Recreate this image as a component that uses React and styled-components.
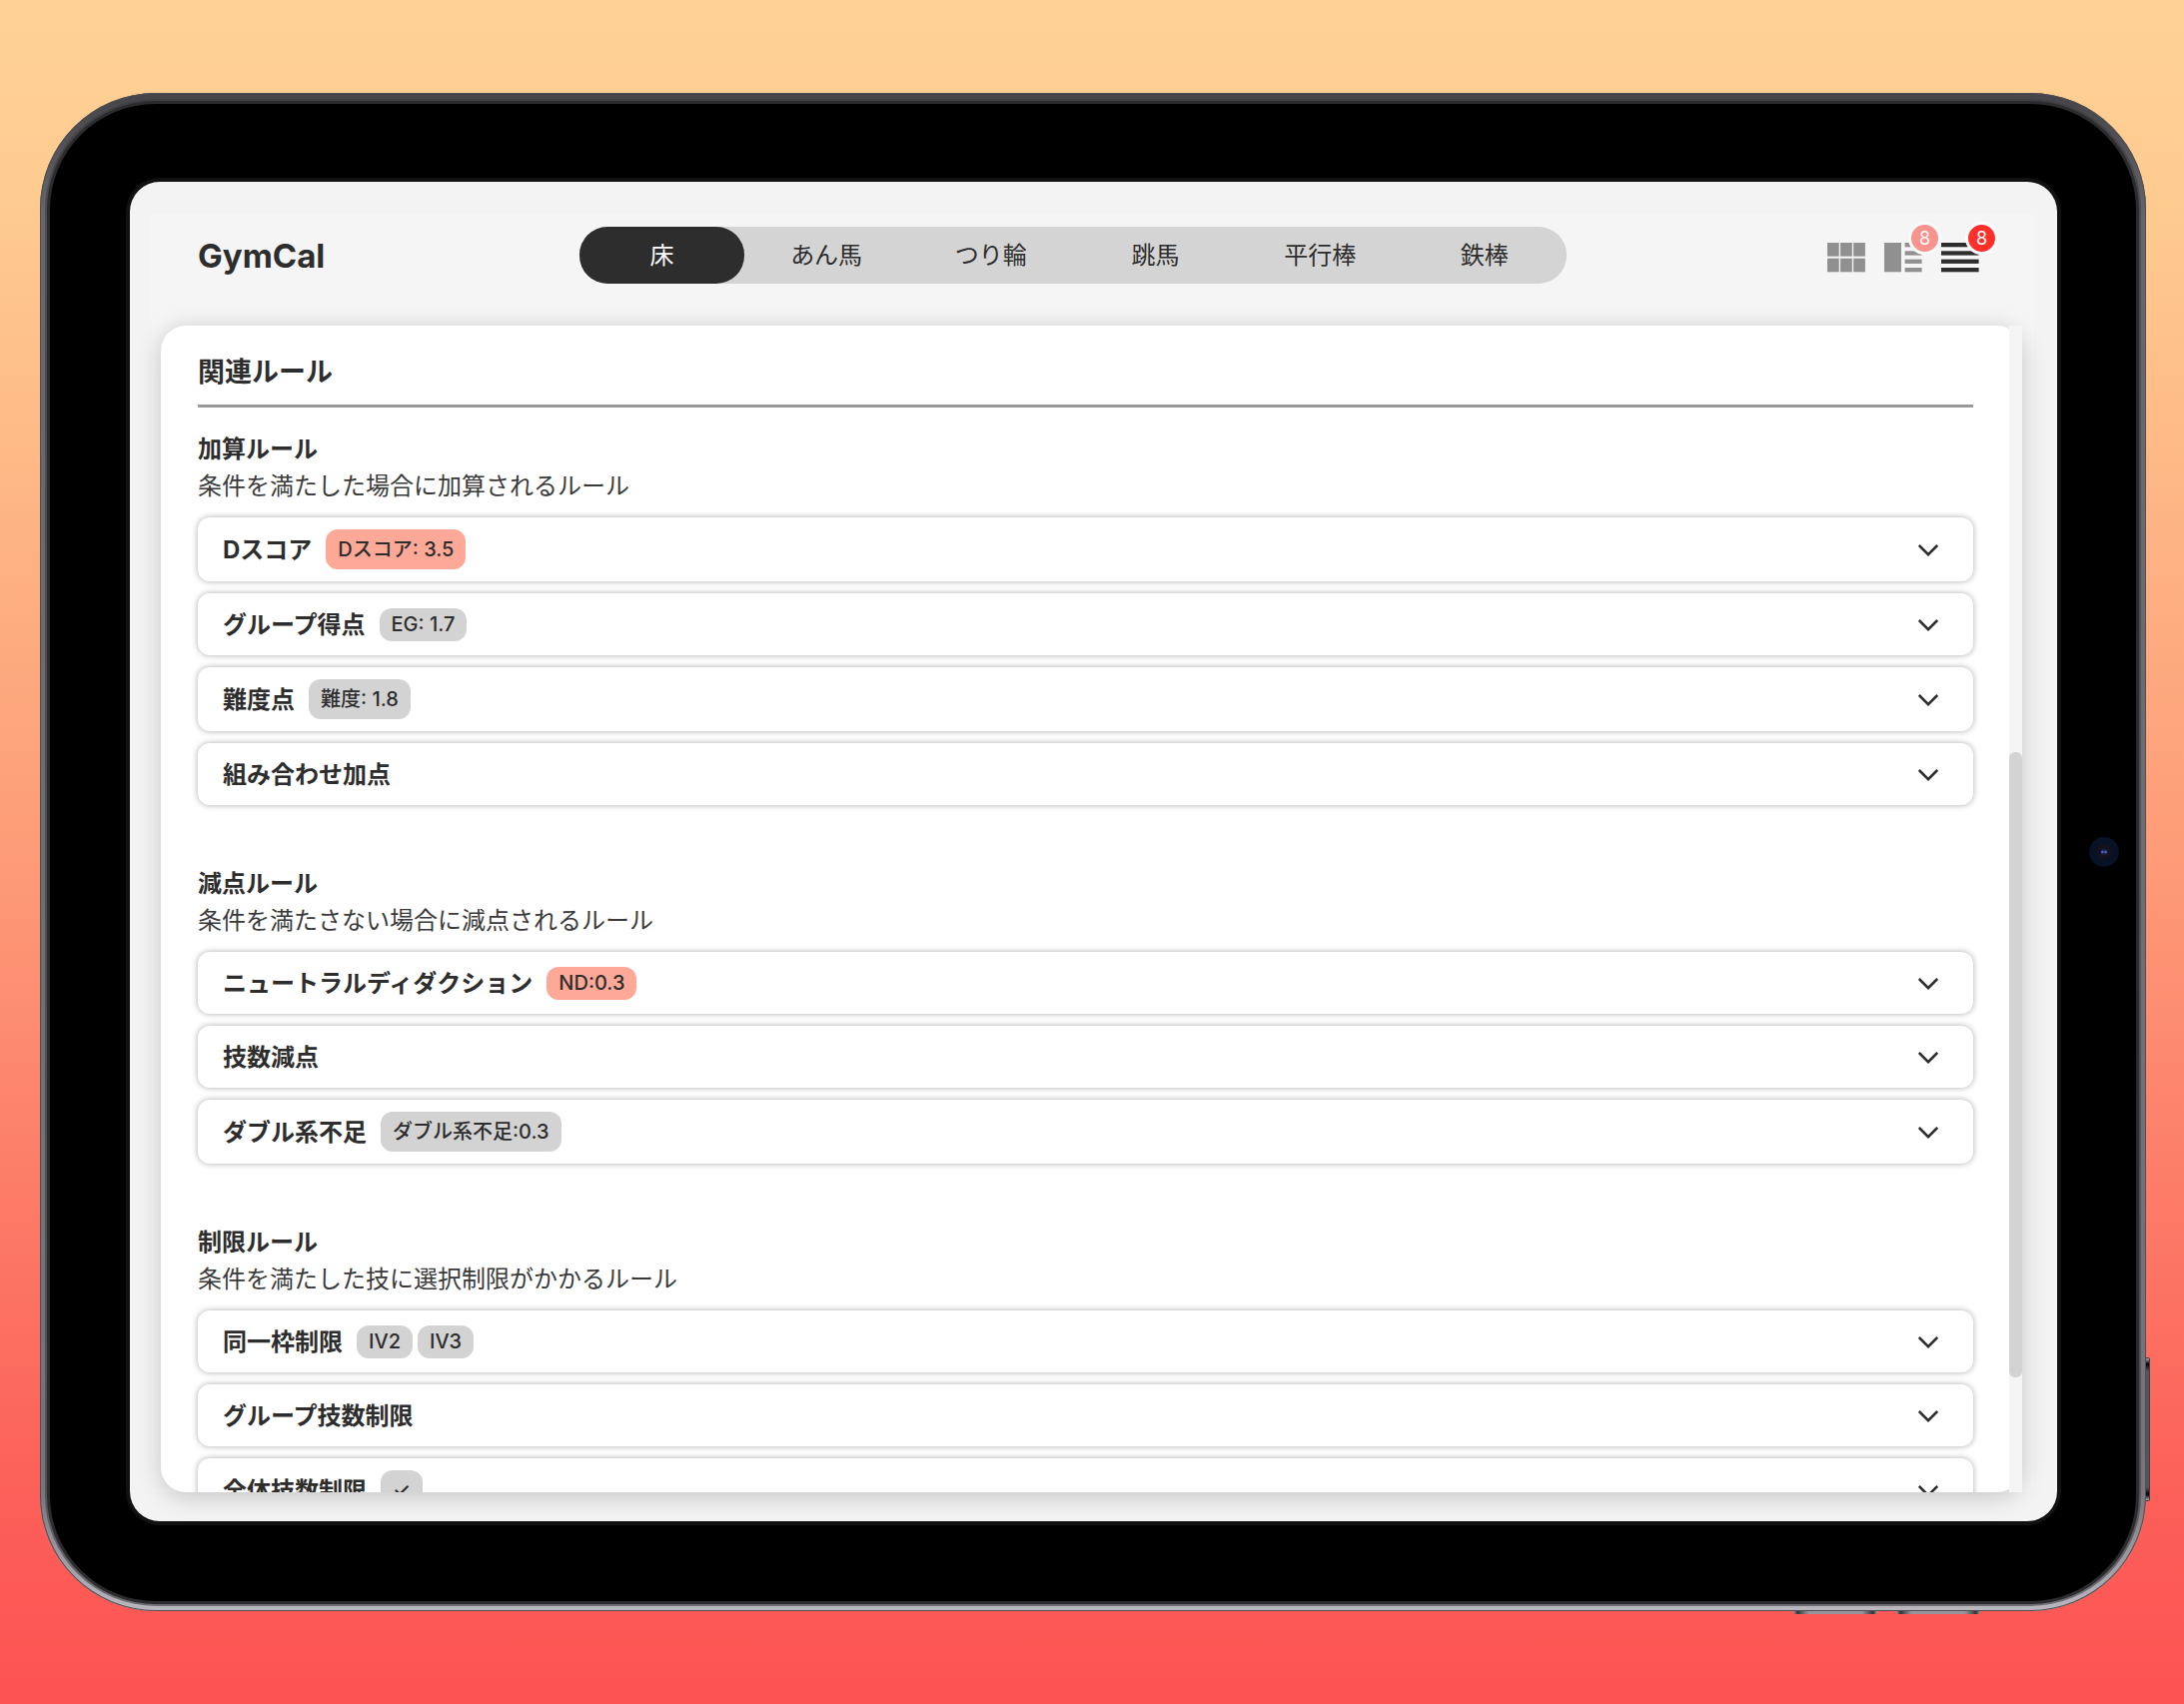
import React, { useState } from "react";
import styled, { createGlobalStyle } from "styled-components";

const GlobalStyle = createGlobalStyle`
  *, *::before, *::after { box-sizing: border-box; }
  body {
    margin: 0;
    color: #2d2d2d;
    font-family: Inter, "Noto Sans CJK JP", sans-serif;
    font-size: 24px;
  }
  h1, h2, h3, p, ul { margin: 0; padding: 0; }
  button { font: inherit; color: inherit; border: 0; background: none; padding: 0; cursor: pointer; }
`;

const Stage = styled.div`
  display: flex;
  height: 100vh;
  padding: 93px 38px 93px 40px;
  background: linear-gradient(180deg, #ffd196 0%, #fecb90 12%, #fd9c78 50%, #fc5f59 88%, #fd5352 100%);
`;

const Device = styled.div`
  position: relative;
  flex: 1;
  display: flex;
  min-width: 0;
  padding: 11px 10px 10px;
  border-radius: 116px;
  background: linear-gradient(180deg, #454448 0%, #66656a 8%, #77757b 92%, #bab7be 100%);
  box-shadow: inset 0 0 0 1px #504f53;
`;

const Bezel = styled.div`
  flex: 1;
  display: flex;
  min-width: 0;
  padding: 78px 79px 80px 80px;
  border-radius: 106px;
  background: #000;
  box-shadow: 0 0 0 3px #2c2c2e, 0 0 0 5px rgba(60, 60, 63, 0.6);
`;

const SideButton = styled.span`
  position: absolute;
  right: -4px;
  bottom: 110px;
  width: 4px;
  height: 144px;
  border: 1px solid #3c3b3e;
  border-left: 0;
  border-radius: 0 2px 2px 0;
  background: linear-gradient(180deg, #aaa 0%, #000 4%, #555 9%, #555 91%, #000 96%, #aaa 100%);
`;

const VolumeButton = styled.span`
  position: absolute;
  bottom: -3px;
  right: ${(p) => p.$right}px;
  width: 84px;
  height: 3px;
  border-radius: 0 0 2px 2px;
  background: linear-gradient(90deg, #999 0%, #333 5%, #98969c 18%, #98969c 82%, #333 95%, #999 100%);
`;

const Camera = styled.svg`
  position: absolute;
  right: 27px;
  top: 50%;
  width: 30px;
  height: 30px;
  margin-top: -15px;
`;

const Screen = styled.div`
  flex: 1;
  display: flex;
  min-width: 0;
  padding: 32px 23px 29px 21px;
  border-radius: 30px;
  background: #f3f3f3;
  box-shadow: 0 0 0 4px #121111;
  overflow: hidden;
`;

const Page = styled.div`
  flex: 1;
  display: flex;
  flex-direction: column;
  min-width: 0;
  background: #f5f5f5;
`;

const Header = styled.header`
  display: flex;
  align-items: center;
  justify-content: space-between;
  height: 83px;
  margin-bottom: 29px;
  padding: 0 55px 0 47px;
`;

const Brand = styled.h1`
  font-size: 33px;
  line-height: 40px;
  font-weight: 700;
`;

const Tabs = styled.nav`
  display: flex;
  flex: 0 1 988px;
  height: 57px;
  margin-right: 6px;
  border-radius: 28px;
  background: #d4d4d4;
`;

const Tab = styled.button`
  flex: 1;
  padding-bottom: 4px;
  border-radius: 28px;
  background: ${(p) => (p.$active ? "#2d2d2d" : "transparent")};
  && { color: ${(p) => (p.$active ? "#fff" : "#2d2d2d")}; }
`;

const Views = styled.div`
  display: flex;
  gap: 19px;
`;

const ViewButton = styled.button`
  position: relative;
  width: 38px;
  height: 30px;
  margin-top: 4px;
  opacity: ${(p) => (p.$active ? 1 : 0.5)};
  svg { display: block; width: 38px; height: 30px; fill: #2d2d2d; }
`;

const Count = styled.span`
  position: absolute;
  top: -21px;
  right: -19px;
  width: 33px;
  height: 33px;
  border: 3px solid #fff;
  border-radius: 50%;
  background: #ff3029;
  color: #fff;
  font-size: 18px;
  line-height: 27px;
  text-align: center;
`;

const Panel = styled.main`
  flex: 1;
  display: flex;
  min-height: 0;
  margin: 0 12px 0 10px;
  border-radius: 25px;
  background: #fff;
  box-shadow: 0 4px 24px rgba(0, 0, 0, 0.2);
`;

const Content = styled.div`
  flex: 1;
  min-width: 0;
  padding: 27px 36px 0 37px;
  border-radius: 25px 0 0 25px;
  overflow: hidden;
`;

const Track = styled.div`
  flex: none;
  display: flex;
  flex-direction: column;
  width: 13px;
  background: #f5f5f5;
`;

const Thumb = styled.div`
  flex: none;
  height: 53.6%;
  margin-top: auto;
  margin-bottom: 115px;
  border-radius: 6px;
  background: #d3d3d3;
`;

const PanelTitle = styled.h2`
  margin-bottom: 23px;
  padding-bottom: 12px;
  border-bottom: 3px solid #999;
  font-size: 27px;
  line-height: 40px;
  font-weight: 700;
`;

const Section = styled.section`
  margin-bottom: 60px;
`;

const SectionTitle = styled.h3`
  font-size: 24px;
  line-height: 37px;
  font-weight: 700;
`;

const Description = styled.p`
  margin-bottom: 13px;
  color: #3a3a3a;
  line-height: 37px;
`;

const Rules = styled.ul`
  display: flex;
  flex-direction: column;
  gap: 12px;
  list-style: none;
`;

const Rule = styled.button`
  display: flex;
  align-items: center;
  width: 100%;
  height: ${(p) => (p.$tall ? 64 : 62)}px;
  padding: 0 35px 0 25px;
  border-radius: 12px;
  background: #fff;
  box-shadow: 0 0 6px rgba(0, 0, 0, 0.33);
  text-align: left;
`;

const RuleName = styled.span`
  margin-right: 14px;
  padding-bottom: 4px;
  font-weight: 700;
`;

const Badges = styled.span`
  display: flex;
  gap: 5px;
`;

const Badge = styled.span`
  padding: 0 12px;
  border-radius: 12px;
  background: ${(p) => (p.$alert ? "#fea998" : "#d3d3d3")};
  font-size: 20px;
  line-height: ${(p) => (p.$tall ? 40 : 33)}px;
  font-weight: 500;
`;

const Chevron = styled.svg`
  width: 20px;
  height: 12px;
  margin-top: 2px;
  margin-left: auto;
  fill: none;
  stroke: #2d2d2d;
  stroke-width: 2.6;
`;

const TABS = ["床", "あん馬", "つり輪", "跳馬", "平行棒", "鉄棒"];

const SECTIONS = [
  {
    title: "加算ルール",
    text: "条件を満たした場合に加算されるルール",
    rules: [
      { name: "Dスコア", tall: true, alert: true, badges: ["Dスコア: 3.5"] },
      { name: "グループ得点", badges: ["EG: 1.7"] },
      { name: "難度点", tall: true, badges: ["難度: 1.8"] },
      { name: "組み合わせ加点" },
    ],
  },
  {
    title: "減点ルール",
    text: "条件を満たさない場合に減点されるルール",
    rules: [
      { name: "ニュートラルディダクション", alert: true, badges: ["ND:0.3"] },
      { name: "技数減点" },
      { name: "ダブル系不足", tall: true, badges: ["ダブル系不足:0.3"] },
    ],
  },
  {
    title: "制限ルール",
    text: "条件を満たした技に選択制限がかかるルール",
    rules: [
      { name: "同一枠制限", badges: ["IV2", "IV3"] },
      { name: "グループ技数制限" },
      { name: "全体技数制限", tall: true, badges: ["✓"] },
    ],
  },
];

const LINE_ROWS = [0, 8.3, 16.6, 25];

const GridIcon = () => (
  <svg viewBox="0 0 38 30" aria-hidden="true">
    {[0, 13.1, 26.2].map((x) =>
      [0, 15.7].map((y) => <rect key={x + "-" + y} x={x} y={y} width="11.7" height="13.6" />)
    )}
  </svg>
);

const SplitIcon = () => (
  <svg viewBox="0 0 38 30" aria-hidden="true">
    <rect width="17" height="29.3" />
    {LINE_ROWS.map((y) => <rect key={y} x="20.6" y={y} width="17" height="4.3" />)}
  </svg>
);

const ListIcon = () => (
  <svg viewBox="0 0 38 30" aria-hidden="true">
    {LINE_ROWS.map((y) => <rect key={y} y={y} width="37.6" height="4.3" />)}
  </svg>
);

const VIEWS = [
  { id: "grid", label: "グリッド表示", Icon: GridIcon },
  { id: "split", label: "分割表示", Icon: SplitIcon, count: 8 },
  { id: "list", label: "リスト表示", Icon: ListIcon, count: 8 },
];

function RuleRow({ rule }) {
  return (
    <li>
      <Rule type="button" aria-expanded="false" $tall={rule.tall}>
        <RuleName>{rule.name}</RuleName>
        <Badges>
          {(rule.badges || []).map((b) => (
            <Badge key={b} $tall={rule.tall} $alert={rule.alert}>{b}</Badge>
          ))}
        </Badges>
        <Chevron viewBox="0 0 20 12" aria-hidden="true">
          <path d="M0.8 0.9 L10 10.1 L19.2 0.9" />
        </Chevron>
      </Rule>
    </li>
  );
}

export default function App() {
  const [tab, setTab] = useState(TABS[0]);
  const [view, setView] = useState("list");
  return (
    <>
      <GlobalStyle />
      <Stage>
        <Device>
          <SideButton />
          <VolumeButton $right={269} />
          <VolumeButton $right={166} />
          <Bezel>
            <Screen>
              <Page>
                <Header>
                  <Brand>GymCal</Brand>
                  <Tabs>
                    {TABS.map((t) => (
                      <Tab key={t} type="button" $active={t === tab} onClick={() => setTab(t)}>{t}</Tab>
                    ))}
                  </Tabs>
                  <Views>
                    {VIEWS.map(({ id, label, Icon, count }) => (
                      <ViewButton key={id} type="button" aria-label={label} $active={id === view} onClick={() => setView(id)}>
                        <Icon />
                        {count && <Count>{count}</Count>}
                      </ViewButton>
                    ))}
                  </Views>
                </Header>
                <Panel>
                  <Content>
                    <PanelTitle>関連ルール</PanelTitle>
                    {SECTIONS.map((s) => (
                      <Section key={s.title}>
                        <SectionTitle>{s.title}</SectionTitle>
                        <Description>{s.text}</Description>
                        <Rules>
                          {s.rules.map((r) => <RuleRow key={r.name} rule={r} />)}
                        </Rules>
                      </Section>
                    ))}
                  </Content>
                  <Track>
                    <Thumb />
                  </Track>
                </Panel>
              </Page>
            </Screen>
          </Bezel>
          <Camera viewBox="0 0 30 30" aria-hidden="true">
            <circle cx="15" cy="15" r="15" fill="#071226" />
            <circle cx="15" cy="15" r="8" fill="#11121b" />
            <circle cx="15" cy="15" r="3.5" fill="#1a1c3c" />
            <circle cx="13.4" cy="15" r="1.4" fill="#4a5cb8" />
            <circle cx="16.6" cy="15" r="1.4" fill="#4a5cb8" />
          </Camera>
        </Device>
      </Stage>
    </>
  );
}
